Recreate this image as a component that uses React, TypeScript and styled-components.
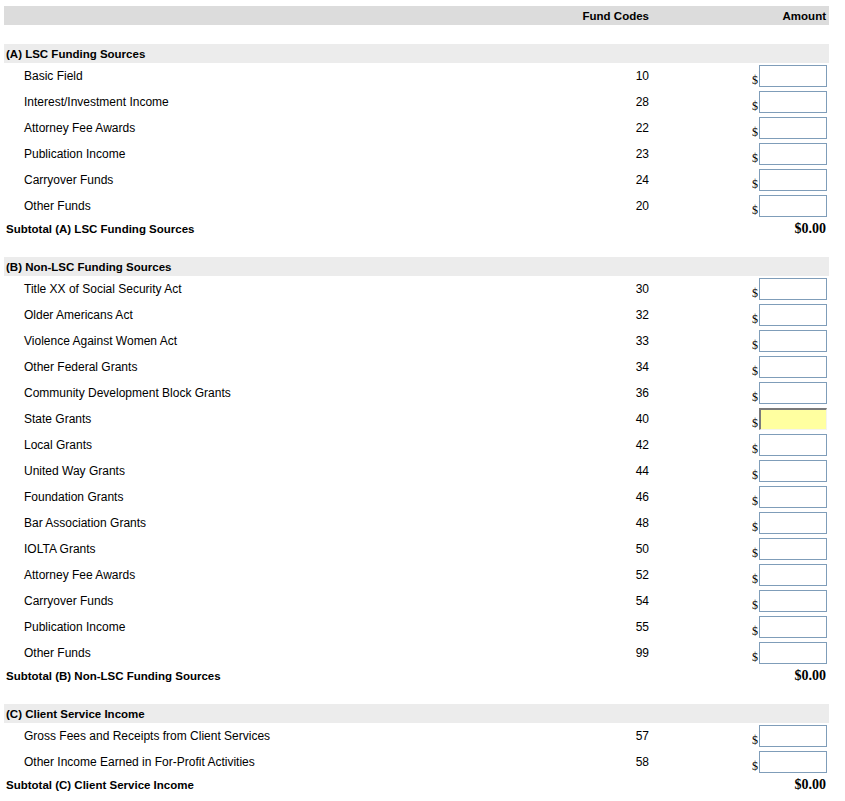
import React from "react";
import styled, { createGlobalStyle, css } from "styled-components";

const Global = createGlobalStyle`
  html, body { margin: 0; padding: 0; background: #ffffff; }
  body { font-family: "Liberation Sans", Arial, sans-serif; color: #000; }
`;

const Sheet = styled.div`
  width: 825px;
  margin: 6px 0 0 4px;
  display: flex;
  flex-direction: column;
`;

const Row = styled.div<{ $h: number }>`
  display: grid;
  grid-template-columns: 1fr 80px 180px;
  align-items: center;
  height: ${(p) => p.$h}px;
`;

const HeaderRow = styled(Row)`
  background: #dcdcdc;
  font-weight: bold;
  font-size: 11.5px;
`;

const SectionRow = styled(Row)`
  background: #ececec;
  font-weight: bold;
  font-size: 11.5px;
`;

const SubtotalRow = styled(Row)`
  font-weight: bold;
  font-size: 11.5px;
`;

const Spacer = styled.div`
  height: 19px;
`;

const Label = styled.div<{ $indent?: boolean }>`
  padding-left: ${(p) => (p.$indent ? 20 : 2)}px;
  font-size: ${(p) => (p.$indent ? "12px" : "inherit")};
  white-space: nowrap;
`;

const Code = styled.div`
  text-align: right;
  font-size: 12px;
`;

const HeadCode = styled.div`
  text-align: right;
`;

const AmountCell = styled.div`
  display: flex;
  justify-content: flex-end;
  align-items: flex-end;
  padding-right: 2px;
`;

const HeadAmount = styled.div`
  text-align: right;
  padding-right: 3px;
`;

const Dollar = styled.span`
  font-family: "Liberation Serif", "Times New Roman", serif;
  font-size: 12px;
  line-height: 14px;
  margin-right: 1px;
`;

const AmountInput = styled.input<{ $active?: boolean }>`
  box-sizing: border-box;
  width: 68px;
  height: 22px;
  margin: 0;
  padding: 0 2px;
  font-family: "Liberation Sans", Arial, sans-serif;
  font-size: 12px;
  background: #ffffff;
  border: 1px solid #7f9db9;
  outline: none;
  ${(p) =>
    p.$active &&
    css`
      background: #ffffa0;
      border-style: solid;
      border-width: 2px 1px 1px 2px;
      border-color: #7a7a7a #f4f4ee #f4f4ee #7a7a7a;
    `}
`;

const Total = styled.div`
  text-align: right;
  padding-right: 3px;
  font-family: "Liberation Serif", "Times New Roman", serif;
  font-weight: bold;
  font-size: 14px;
`;

type Item = { label: string; code: string; active?: boolean };
type Section = { title: string; items: Item[] };

const sections: Section[] = [
  {
    title: "(A) LSC Funding Sources",
    items: [
      { label: "Basic Field", code: "10" },
      { label: "Interest/Investment Income", code: "28" },
      { label: "Attorney Fee Awards", code: "22" },
      { label: "Publication Income", code: "23" },
      { label: "Carryover Funds", code: "24" },
      { label: "Other Funds", code: "20" },
    ],
  },
  {
    title: "(B) Non-LSC Funding Sources",
    items: [
      { label: "Title XX of Social Security Act", code: "30" },
      { label: "Older Americans Act", code: "32" },
      { label: "Violence Against Women Act", code: "33" },
      { label: "Other Federal Grants", code: "34" },
      { label: "Community Development Block Grants", code: "36" },
      { label: "State Grants", code: "40", active: true },
      { label: "Local Grants", code: "42" },
      { label: "United Way Grants", code: "44" },
      { label: "Foundation Grants", code: "46" },
      { label: "Bar Association Grants", code: "48" },
      { label: "IOLTA Grants", code: "50" },
      { label: "Attorney Fee Awards", code: "52" },
      { label: "Carryover Funds", code: "54" },
      { label: "Publication Income", code: "55" },
      { label: "Other Funds", code: "99" },
    ],
  },
  {
    title: "(C) Client Service Income",
    items: [
      { label: "Gross Fees and Receipts from Client Services", code: "57" },
      { label: "Other Income Earned in For-Profit Activities", code: "58" },
    ],
  },
];

export default function App() {
  return (
    <>
      <Global />
      <Sheet>
        <HeaderRow $h={19}>
          <Label />
          <HeadCode>Fund Codes</HeadCode>
          <HeadAmount>Amount</HeadAmount>
        </HeaderRow>
        {sections.map((s) => (
          <React.Fragment key={s.title}>
            <Spacer />
            <SectionRow $h={19}>
              <Label>{s.title}</Label>
              <div />
              <div />
            </SectionRow>
            {s.items.map((it) => (
              <Row $h={26} key={it.code}>
                <Label $indent>{it.label}</Label>
                <Code>{it.code}</Code>
                <AmountCell>
                  <Dollar>$</Dollar>
                  <AmountInput type="text" $active={it.active} />
                </AmountCell>
              </Row>
            ))}
            <SubtotalRow $h={19}>
              <Label>Subtotal {s.title}</Label>
              <div />
              <Total>$0.00</Total>
            </SubtotalRow>
          </React.Fragment>
        ))}
      </Sheet>
    </>
  );
}
